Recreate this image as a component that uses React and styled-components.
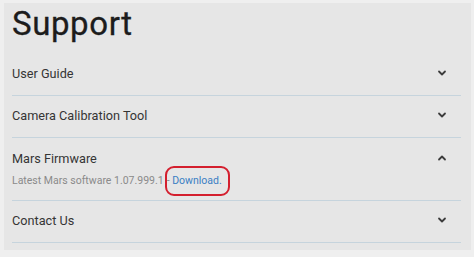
import React from "react";
import styled, { createGlobalStyle } from "styled-components";

const Global = createGlobalStyle`
  html, body { margin: 0; padding: 0; background: #eeeeee; }
  body { font-family: Roboto, "Noto Sans", Arial, sans-serif; }
`;

const Frame = styled.div`
  width: 474px;
  height: 257px;
  box-sizing: border-box;
  padding: 3px 3px 7px 4px;
  background: #efefef;
`;

const Panel = styled.div`
  height: 100%;
  background: #e6e6e6;
  padding: 4px 10px 0 8px;
  box-sizing: border-box;
`;

const Title = styled.h1`
  margin: 0;
  font-size: 33px;
  font-weight: 400;
  line-height: 34px;
  color: #1c1c1c;
  letter-spacing: 0.6px;
  -webkit-text-stroke: 0.3px #1c1c1c;
`;

const List = styled.div`
  margin-top: 13px;
  display: flex;
  flex-direction: column;
`;

const Item = styled.div`
  border-bottom: 1px solid #c6d4dd;
  padding: ${(p) => (p.$open ? "10px 0 10px" : "9px 0 12px")};
  display: flex;
  flex-direction: column;
`;

const Header = styled.div`
  display: flex;
  align-items: center;
  justify-content: space-between;
  height: 20px;
`;

const Label = styled.span`
  font-size: 12.7px;
  color: #353535;
`;

const Chevron = styled.svg`
  width: 10px;
  height: 10px;
  margin-right: 14px;
  color: #3c3c3c;
`;

const Body = styled.div`
  margin-top: 4px;
  font-size: 10.5px;
  color: #8a8a8a;
  line-height: 18px;
  display: flex;
  align-items: center;
`;

const LinkWrap = styled.span`
  position: relative;
  margin-left: 3px;
`;

const Link = styled.a`
  color: #3b7fc4;
  text-decoration: none;
`;

const Ring = styled.span`
  position: absolute;
  left: -2px;
  right: -8px;
  top: -6px;
  bottom: -6px;
  border: 2px solid #d41f2e;
  border-radius: 9px;
  pointer-events: none;
`;

function Icon({ up }) {
  return (
    <Chevron viewBox="0 0 10 10">
      <path
        d={up ? "M2 6.5 L5 3.5 L8 6.5" : "M2 3.5 L5 6.5 L8 3.5"}
        fill="none"
        stroke="currentColor"
        strokeWidth="1.8"
        strokeLinecap="round"
        strokeLinejoin="round"
      />
    </Chevron>
  );
}

export default function App() {
  return (
    <>
      <Global />
      <Frame>
        <Panel>
          <Title>Support</Title>
          <List>
            <Item>
              <Header>
                <Label>User Guide</Label>
                <Icon />
              </Header>
            </Item>
            <Item>
              <Header>
                <Label>Camera Calibration Tool</Label>
                <Icon />
              </Header>
            </Item>
            <Item $open>
              <Header>
                <Label>Mars Firmware</Label>
                <Icon up />
              </Header>
              <Body>
                Latest Mars software 1.07.999.1
                <LinkWrap>
                  - <Link href="#">Download.</Link>
                  <Ring />
                </LinkWrap>
              </Body>
            </Item>
            <Item>
              <Header>
                <Label>Contact Us</Label>
                <Icon />
              </Header>
            </Item>
          </List>
        </Panel>
      </Frame>
    </>
  );
}
